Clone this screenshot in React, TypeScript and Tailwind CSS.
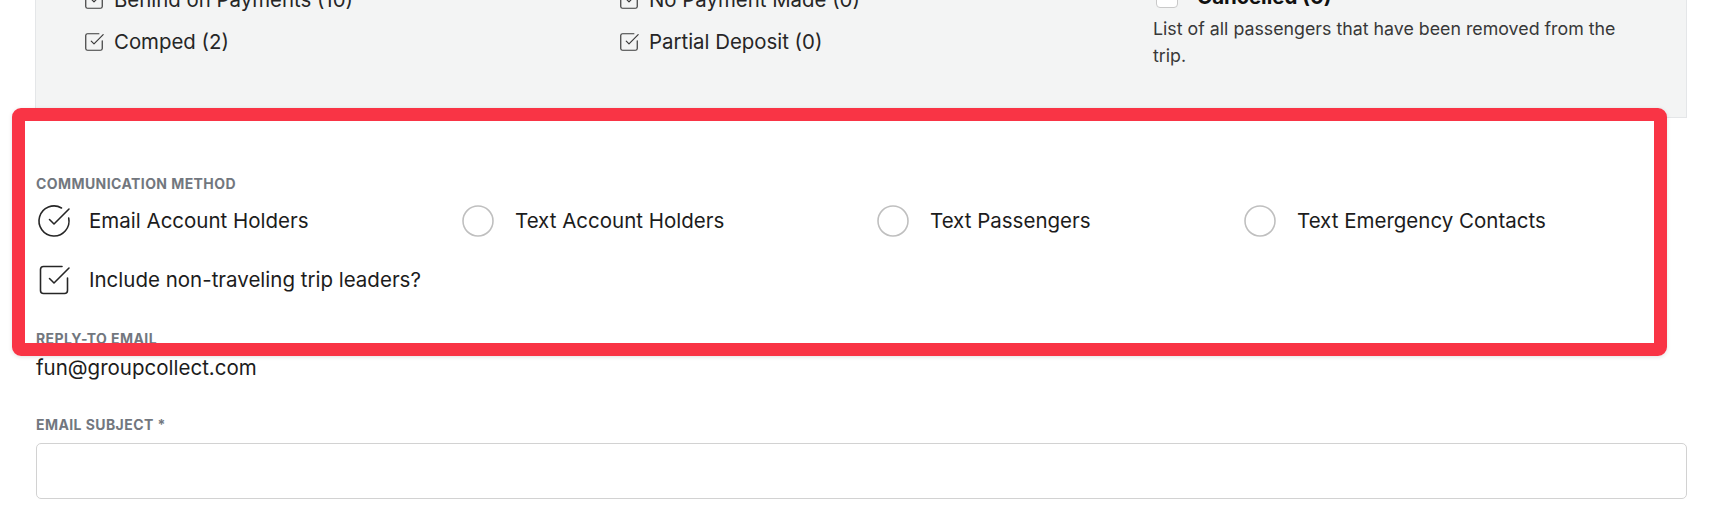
import React from "react";
import { CircleCheckBig, SquareCheckBig, Circle } from "lucide-react";

function SmallCheck({ label }: { label: string }) {
  return (
    <div className="flex items-center gap-[9px] h-[28px]">
      <SquareCheckBig size={22} strokeWidth={1.3} className="text-[#3a3a3a] shrink-0" />
      <span className="text-[20.4px] leading-[28px] text-[#262626]">{label}</span>
    </div>
  );
}

function Radio({ label, w }: { label: string; w: string }) {
  return (
    <div className={`flex items-center gap-[19px] h-[36px] ${w}`}>
      <Circle size={36} strokeWidth={1.05} className="text-[#bfbfbf] shrink-0" />
      <span className="text-[20.5px] leading-[28px]">{label}</span>
    </div>
  );
}

export default function App() {
  return (
    <div className="relative w-[1728px] h-[508px] overflow-hidden bg-white font-['Inter','Noto_Sans',sans-serif] text-[#1c1c1c]">
      <div className="pl-[35px] pr-[41px]">
        {/* filter panel (scrolled partly out of view) */}
        <div className="mt-[-42px] h-[160px] border border-[#e4e6e8] bg-[#f3f4f4] pt-[27px] pl-[47px] flex">
          <div className="w-[535px] flex flex-col gap-[14px]">
            <SmallCheck label="Behind on Payments (10)" />
            <SmallCheck label="Comped (2)" />
          </div>
          <div className="w-[535px] flex flex-col gap-[14px]">
            <SmallCheck label="No Payment Made (0)" />
            <SmallCheck label="Partial Deposit (0)" />
          </div>
          <div className="w-[490px] mt-[-3px]">
            <div className="flex items-center gap-[19px] h-[28px] pl-[3px]">
              <div className="w-[22px] h-[22px] rounded-[4px] border border-[#c9c9c9] bg-white shrink-0" />
              <span className="text-[20.5px] leading-[28px] font-bold text-[#111]">Cancelled (0)</span>
            </div>
            <p className="mt-[4px] text-[17.8px] leading-[27px] text-[#383838]">
              List of all passengers that have been removed from the trip.
            </p>
          </div>
        </div>

        {/* communication section */}
        <div className="ml-[1px]">
          <div className="mt-[56px] text-[14px] leading-[20px] font-bold tracking-[0.03em] uppercase text-[#72777e]">
            Communication Method
          </div>
          <div className="mt-[9px] flex items-center">
            <div className="flex items-center gap-[17px] h-[36px] w-[424px]">
              <CircleCheckBig size={36} strokeWidth={1.05} className="text-[#262626] shrink-0" />
              <span className="text-[20.5px] leading-[28px]">Email Account Holders</span>
            </div>
            <Radio label="Text Account Holders" w="w-[415px]" />
            <Radio label="Text Passengers" w="w-[367px]" />
            <Radio label="Text Emergency Contacts" w="" />
          </div>
          <div className="mt-[23px] flex items-center gap-[17px] h-[36px]">
            <SquareCheckBig size={36} strokeWidth={1.05} className="text-[#262626] shrink-0" />
            <span className="text-[20.5px] leading-[28px]">Include non-traveling trip leaders?</span>
          </div>

          <div className="mt-[31px] text-[14px] leading-[20px] font-bold tracking-[0.03em] uppercase text-[#72777e]">
            Reply-to Email
          </div>
          <div className="mt-[5px] text-[20.5px] leading-[28px]">fun@groupcollect.com</div>

          <div className="mt-[33px] text-[14px] leading-[20px] font-bold tracking-[0.03em] uppercase text-[#72777e]">
            Email Subject *
          </div>
          <div className="mt-[8px] h-[56px] rounded-[5px] border border-[#d2d2d2] bg-white" />
        </div>
      </div>

      {/* highlight annotation */}
      <div className="absolute left-[12px] top-[108px] w-[1655px] h-[248px] border-[13px] border-[#f93445] rounded-[9px] shadow-[0_1px_4px_rgba(0,0,0,0.12)] pointer-events-none" />
    </div>
  );
}
